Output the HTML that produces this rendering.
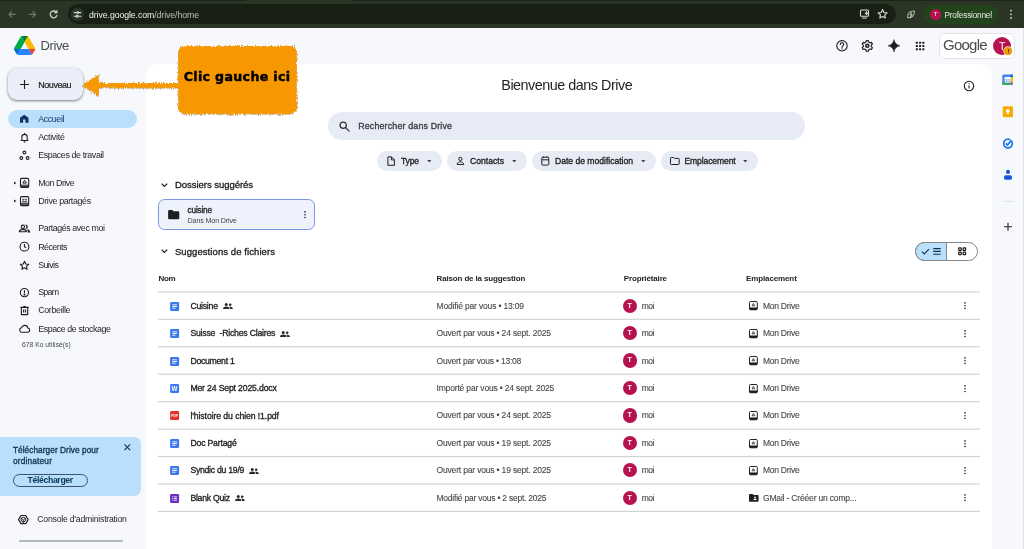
<!DOCTYPE html>
<html lang="fr"><head><meta charset="utf-8"><title>Accueil - Google Drive</title>
<style>
*{box-sizing:border-box;margin:0;padding:0}
html,body{width:1024px;height:549px;overflow:hidden;background:#f6f8fc;font-family:"Liberation Sans",sans-serif;color:#1f1f1f}
#wrap{position:absolute;left:0;top:0;width:1024px;height:549px;will-change:transform}
.a{position:absolute;white-space:nowrap}
.t{position:absolute;white-space:nowrap;line-height:14px;height:14px}
svg{position:absolute;overflow:visible}
#bar{left:0;top:0;width:1024px;height:27.600px;background:#2b3526}
#bar0{left:0;top:0;width:246px;height:1px;background:#1c2519}
#bar1{left:352px;top:0;width:672px;height:1px;background:#1c2519}
#url{left:68px;top:4px;width:828px;height:20px;border-radius:10px;background:#182014}
#prof{left:924px;top:5px;width:74px;height:19px;border-radius:10px;background:#23431c}
#main{left:146px;top:64px;width:846px;height:485px;background:#fff;border-radius:10px 10px 0 0}
.line{position:absolute;left:158px;width:822.3px;height:1px;background:#dcdcdc}
.chip{position:absolute;top:150.600px;height:20.900px;border-radius:10.500px;background:#e6ebf5}
.av{position:absolute;border-radius:50%;background:#b5124f;color:#fff;text-align:center}
</style></head><body><div id="wrap">
<div class="a" id="bar"></div><div class="a" id="bar0"></div><div class="a" id="bar1"></div><div class="a" id="url"></div><div class="a" id="prof"></div>
<svg style="left:0;top:0" width="1024" height="28" viewBox="0 0 1024 28" fill="none" stroke-linecap="round" stroke-linejoin="round">
<g stroke="#6f7a6c" stroke-width="1.2"><path d="M15 14.3H9M11.6 11.6L9 14.3l2.600 2.700"/><path d="M29.500 14.300h6M32.900 11.600l2.600 2.700-2.600 2.700"/></g>
<g stroke="#c9d1c6" stroke-width="1.300"><path d="M56.300 12.200a3.400 3.400 0 1 0 .600 3.300"/><path d="M56.900 10.600v2.200h-2.200"/></g>
<circle cx="77.500" cy="14.300" r="6.600" fill="#2b362a" stroke="none"/>
<g stroke="#d6ddd3" stroke-width="1.100"><path d="M74.300 12.600h2.200M79 12.600h1.800M74.300 16.200h1.800M78.600 16.200h2.200"/><circle cx="77.800" cy="12.600" r=".900"/><circle cx="77.200" cy="16.200" r=".900"/></g>
<g stroke="#d6ddd3" stroke-width="1.100"><rect x="860.500" y="10" width="8" height="6.200" rx="1"/><path d="M862.500 18h4M866.500 11.500v2.600M865.300 13.200l1.200 1.200 1.200-1.200"/></g>
<path d="M882.600 9.600l1.350 2.900 3.150.350-2.350 2.100.650 3.100-2.800-1.600-2.800 1.600.650-3.100-2.350-2.100 3.150-.350z" stroke="#d6ddd3" stroke-width="1.100"/>
<g stroke="#aab3a7" stroke-width="1.100"><path d="M907.500 17.600c0-4.600 2.500-7 7-6.600 0 4.800-2.600 7-7 6.600z"/><path d="M911.600 12.600l-1.400 2h1.800l-1.400 2"/></g>
<g fill="#d6ddd3" stroke="none"><circle cx="1011" cy="10.600" r=".900"/><circle cx="1011" cy="14.300" r=".900"/><circle cx="1011" cy="18" r=".900"/></g>
</svg>
<div class="t" style="left:89px;top:8px;font-size:8.7px;color:#f1f4ef;font-weight:normal;letter-spacing:-0.059px;">drive.google.com<span style="color:#b9c1b6">/drive/home</span></div>
<div class="av" style="left:930px;top:9px;width:11px;height:11px;font-size:6px;line-height:11px">T</div>
<div class="t" style="left:944.5px;top:8px;font-size:8.3px;color:#e4eae1;font-weight:normal;letter-spacing:-0.223px;">Professionnel</div>
<svg style="left:14.200px;top:36px" width="21.200" height="19" viewBox="0 0 87.300 78">
<path d="m6.600 66.850 3.850 6.650c.8 1.400 1.950 2.500 3.300 3.300l13.750-23.800h-27.500c0 1.550.4 3.100 1.200 4.500z" fill="#0066da"/>
<path d="m43.650 25-13.750-23.800c-1.350.8-2.500 1.900-3.300 3.300l-25.400 44a9.060 9.060 0 0 0 -1.200 4.500h27.500z" fill="#00ac47"/>
<path d="m73.550 76.800c1.350-.8 2.500-1.900 3.300-3.300l1.600-2.750 7.650-13.250c.8-1.400 1.200-2.950 1.200-4.500h-27.502l5.852 11.500z" fill="#ea4335"/>
<path d="m43.650 25 13.750-23.800c-1.350-.8-2.900-1.200-4.500-1.200h-18.500c-1.600 0-3.150.45-4.500 1.200z" fill="#00832d"/>
<path d="m59.800 53h-32.300l-13.750 23.800c1.350.8 2.900 1.200 4.500 1.200h50.800c1.600 0 3.150-.45 4.500-1.200z" fill="#2684fc"/>
<path d="m73.400 26.500-12.700-22c-.8-1.400-1.950-2.500-3.300-3.300l-13.750 23.800 16.150 28h27.450c0-1.550-.4-3.100-1.200-4.500z" fill="#ffba00"/>
</svg>
<div class="t" style="left:40.5px;top:39px;font-size:13px;color:#4a4d4c;font-weight:normal;letter-spacing:-0.410px;">Drive</div>
<svg style="left:0;top:28px" width="1024" height="40" viewBox="0 28 1024 40" fill="none">
<g stroke="#1f1f1f" stroke-width="1.100"><circle cx="842" cy="45.800" r="5.200"/><path d="M840.300 44.500a1.700 1.700 0 1 1 2.600 1.400c-.600.400-.900.800-.900 1.500" stroke-linecap="round"/></g><circle cx="842" cy="48.900" r=".700" fill="#1f1f1f"/>
<g stroke="#1f1f1f" stroke-width="1.200"><circle cx="867.300" cy="45.800" r="1.500" stroke-width="1.600"/><path d="M866.300 40.600h2l.350 1.500 1.300.750 1.450-.450 1 1.730-1.100 1.050v1.500l1.100 1.050-1 1.730-1.450-.450-1.300.750-.350 1.500h-2l-.350-1.500-1.300-.750-1.450.450-1-1.730 1.100-1.050v-1.500l-1.100-1.050 1-1.730 1.450.450 1.300-.750z" stroke-linejoin="round"/></g>
<path d="M894 39.600c.700 3.500 2.500 5.400 6 6.200-3.500.800-5.300 2.700-6 6.200-.700-3.500-2.500-5.400-6-6.200 3.500-.800 5.300-2.700 6-6.200z" fill="#1f1f1f" stroke="#1f1f1f" stroke-width=".500" stroke-linejoin="round"/>
<g fill="#1f1f1f"><rect x="915.800" y="41.700" width="2.100" height="2.100" rx=".500"/><rect x="919.050" y="41.700" width="2.100" height="2.100" rx=".500"/><rect x="922.300" y="41.700" width="2.100" height="2.100" rx=".500"/><rect x="915.800" y="44.950" width="2.100" height="2.100" rx=".500"/><rect x="919.050" y="44.950" width="2.100" height="2.100" rx=".500"/><rect x="922.300" y="44.950" width="2.100" height="2.100" rx=".500"/><rect x="915.800" y="48.200" width="2.100" height="2.100" rx=".500"/><rect x="919.050" y="48.200" width="2.100" height="2.100" rx=".500"/><rect x="922.300" y="48.200" width="2.100" height="2.100" rx=".500"/></g>
</svg>
<div class="a" style="left:938.500px;top:32.500px;width:76px;height:26.500px;border-radius:6px;background:#fff;border:1px solid #dfe3ea"></div>
<div class="t" style="left:943px;top:38px;font-size:15px;color:#4a4d51;font-weight:normal;letter-spacing:-0.759px;">Google</div>
<div class="av" style="left:993.100px;top:37px;width:18.300px;height:18.300px;font-size:10.500px;line-height:18.300px">T</div>
<div class="a" style="left:1004.400px;top:47.200px;width:8px;height:8px;border-radius:50%;background:#f09a00;box-shadow:0 0 0 .700px #f6ead8;color:#1f1f1f;font-size:6px;line-height:8px;text-align:center;font-weight:bold">!</div>
<div class="a" id="main"></div><div class="a" style="left:1023px;top:28px;width:1px;height:521px;background:#e0e3e9"></div>
<div class="a" style="left:8px;top:68px;width:75px;height:32px;border-radius:9px;background:#e9eef8;box-shadow:0 1px 3px rgba(60,64,67,.450),0 1px 2px rgba(60,64,67,.300)"></div>
<svg style="left:18.500px;top:79px" width="11" height="11" viewBox="0 0 11 11"><path d="M5.500 1v9M1 5.500h9" stroke="#1f1f1f" stroke-width="1.100"/></svg>
<div class="t" style="left:38.3px;top:78px;font-size:9px;color:#1f1f1f;font-weight:normal;-webkit-text-stroke:.2px;letter-spacing:-0.466px;">Nouveau</div>
<div class="a" style="left:8.300px;top:110px;width:128.500px;height:18px;border-radius:9px;background:#b9dffc"></div>
<div class="t" style="left:38.2px;top:112px;font-size:8.9px;color:#0f3d6b;font-weight:normal;letter-spacing:-0.388px;">Accueil</div>
<div class="t" style="left:38.2px;top:130px;font-size:8.9px;color:#1f1f1f;font-weight:normal;letter-spacing:-0.281px;">Activité</div>
<div class="t" style="left:38.2px;top:148px;font-size:8.9px;color:#1f1f1f;font-weight:normal;letter-spacing:-0.396px;">Espaces de travail</div>
<div class="t" style="left:38.2px;top:176px;font-size:8.9px;color:#1f1f1f;font-weight:normal;letter-spacing:-0.489px;">Mon Drive</div>
<div class="t" style="left:38.2px;top:194px;font-size:8.9px;color:#1f1f1f;font-weight:normal;letter-spacing:-0.372px;">Drive partagés</div>
<div class="t" style="left:38.2px;top:221px;font-size:8.9px;color:#1f1f1f;font-weight:normal;letter-spacing:-0.425px;">Partagés avec moi</div>
<div class="t" style="left:38.2px;top:240px;font-size:8.9px;color:#1f1f1f;font-weight:normal;letter-spacing:-0.563px;">Récents</div>
<div class="t" style="left:38.2px;top:258px;font-size:8.9px;color:#1f1f1f;font-weight:normal;letter-spacing:-0.598px;">Suivis</div>
<div class="t" style="left:38.2px;top:285px;font-size:8.9px;color:#1f1f1f;font-weight:normal;letter-spacing:-0.739px;">Spam</div>
<div class="t" style="left:38.2px;top:303px;font-size:8.9px;color:#1f1f1f;font-weight:normal;letter-spacing:-0.333px;">Corbeille</div>
<div class="t" style="left:38.2px;top:322px;font-size:8.9px;color:#1f1f1f;font-weight:normal;letter-spacing:-0.419px;">Espace de stockage</div>
<div class="t" style="left:21.9px;top:338px;font-size:6.7px;color:#444746;font-weight:normal;letter-spacing:0.057px;">678 Ko utilisé(s)</div>
<svg style="left:0;top:100px" width="146" height="449" viewBox="0 100 146 449" fill="none" stroke="#1f1f1f" stroke-width="1.100" stroke-linejoin="round">
<path d="M20 122.800v-5l4.250-3 4.250 3v5h-3.100v-3.200h-2.300v3.200z" fill="#0c3761" stroke="none"/>
<path d="M20.700 140.500h7.700M21.900 140.500v-3.500a2.650 2.650 0 0 1 5.300 0v3.500M24.550 133v1M23.700 141.900h1.700"/>
<circle cx="24.450" cy="152.500" r="1.400"/><circle cx="21.300" cy="158" r="1.400"/><circle cx="27.600" cy="158" r="1.400"/>
<path d="M14 181.400l2.300 1.500-2.300 1.500zM14 199.600l2.300 1.500-2.300 1.500z" fill="#1f1f1f" stroke="none"/>
<rect x="20.500" y="178.400" width="8.200" height="9" rx="1.200"/><path d="M20.500 185.200h8.200" stroke-width="1"/><path d="M20.700 186.300h7.800v.3a.8.8 0 0 1-.8.800h-6.200a.8.800 0 0 1-.8-.8z" fill="#1f1f1f" stroke-width=".400"/><path d="M24.600 180.200l1.800 2.900h-3.600z" stroke-width="1"/>
<rect x="20.500" y="196.600" width="8.200" height="9" rx="1.200"/><path d="M20.500 203.300h8.200" stroke-width="1"/><path d="M20.700 204.500h7.800v.3a.8.800 0 0 1-.8.800h-6.200a.8.800 0 0 1-.8-.8z" fill="#1f1f1f" stroke-width=".400"/><circle cx="23.300" cy="199.600" r=".650" stroke-width=".800"/><circle cx="25.900" cy="199.600" r=".650" stroke-width=".800"/><path d="M22.100 201.700h5" stroke-width=".900"/>
<circle cx="22.900" cy="226.800" r="1.650"/><path d="M19.300 231.800c.300-1.800 1.700-2.400 3.600-2.400s3.300.600 3.600 2.400z"/><path d="M25.600 224.800a2 2 0 0 1 0 4 2.700 2.700 0 0 0 0-4zM27.300 229.500c1.600.300 2.600 1 2.700 2.800h-1.900c0-1.200-.300-2.100-.800-2.800z" fill="#1f1f1f" stroke-width=".500"/>
<circle cx="24.450" cy="246.650" r="4.400"/><path d="M24.450 244.100v2.700l1.800 1.100"/>
<path d="M24.500 261.300l1.250 2.700 2.950.350-2.200 2 .600 2.900-2.600-1.500-2.600 1.500.600-2.900-2.200-2 2.950-.350z"/>
<circle cx="24.450" cy="292.600" r="4.100"/><path d="M24.450 290.200v2.800"/><circle cx="24.450" cy="294.600" r=".500" fill="#1f1f1f"/>
<path d="M21.400 307.500h6.300v7.100h-6.300zM20.400 307.400h8.300M23.300 306.500h2.500M23.600 309.500v3.100M25.500 309.500v3.100"/>
<path d="M21.400 332.300h6.200a2.100 2.100 0 0 0 .400-4.170 3.300 3.300 0 0 0-6.400-.500 2.400 2.400 0 0 0-.200 4.670z"/>
<path d="M18.600 519.600l2.400-4.100h4.700l2.400 4.100-2.400 4.100h-4.700z" stroke-width="1.200"/><circle cx="23.350" cy="519.600" r="2.300" stroke-width="1"/><path d="M23.350 519.900v3.300M23.350 519.900l-2.600-1.700M23.350 519.900l2.600-1.700" stroke-width=".800"/>
</svg>
<div class="a" style="left:0;top:437px;width:141.200px;height:59.200px;border-radius:0 7px 7px 0;background:#b9dffc"></div>
<div class="t" style="left:12.9px;top:443px;font-size:8.3px;color:#0b3556;font-weight:normal;-webkit-text-stroke:.32px;letter-spacing:0.048px;">Télécharger Drive pour</div>
<div class="t" style="left:12.9px;top:454px;font-size:8.3px;color:#0b3556;font-weight:normal;-webkit-text-stroke:.32px;letter-spacing:0.182px;">ordinateur</div>
<svg style="left:124.300px;top:443.500px" width="6.600" height="6.600" viewBox="0 0 6.600 6.600"><path d="M.400.400l5.800 5.800M6.200.400l-5.800 5.800" stroke="#0b3556" stroke-width="1.100"/></svg>
<div class="a" style="left:12.900px;top:474px;width:74.800px;height:13.300px;border-radius:7px;border:1px solid #3c546c"></div>
<div class="t" style="left:27.6px;top:473px;font-size:8.7px;color:#0b3556;font-weight:bold;letter-spacing:-0.368px;">Télécharger</div>
<div class="t" style="left:37.3px;top:512px;font-size:8.7px;color:#1f1f1f;font-weight:normal;letter-spacing:-0.228px;">Console d'administration</div>
<div class="a" style="left:18.500px;top:540.200px;width:104.200px;height:1.600px;border-radius:1px;background:#b4b7bb"></div>
<div class="t" style="left:501.3px;top:78px;font-size:14.4px;color:#1f1f1f;font-weight:normal;letter-spacing:-0.497px;">Bienvenue dans Drive</div>
<svg style="left:963px;top:80.300px" width="12" height="12" viewBox="0 0 12 12" fill="none" stroke="#1f1f1f"><circle cx="6" cy="6" r="4.700" stroke-width="1.100"/><path d="M6 5.400v3" stroke-width="1.100"/><circle cx="6" cy="3.700" r=".600" fill="#1f1f1f" stroke="none"/></svg>
<div class="a" style="left:328.300px;top:111.700px;width:477px;height:28.600px;border-radius:14.300px;background:#e6ebf5"></div>
<svg style="left:338.500px;top:121px" width="11" height="11" viewBox="0 0 11 11" fill="none" stroke="#333638" stroke-width="1.250"><circle cx="4.200" cy="4.200" r="3.100"/><path d="M6.500 6.500l3.600 3.600" stroke-linecap="round"/></svg>
<div class="t" style="left:358.2px;top:119px;font-size:8.9px;color:#3a3d40;font-weight:normal;-webkit-text-stroke:.32px;letter-spacing:0.153px;">Rechercher dans Drive</div>
<div class="chip" style="left:377.4px;width:64.8px"></div>
<div class="t" style="left:401px;top:154px;font-size:8.6px;color:#1f1f1f;font-weight:normal;-webkit-text-stroke:.32px;letter-spacing:-0.183px;">Type</div>
<svg style="left:427.2px;top:159.800px" width="4.600" height="2.600" viewBox="0 0 5 3"><path d="M0 0h5l-2.500 3z" fill="#444746"/></svg>
<div class="chip" style="left:447.2px;width:79.6px"></div>
<div class="t" style="left:470px;top:154px;font-size:8.6px;color:#1f1f1f;font-weight:normal;-webkit-text-stroke:.32px;letter-spacing:0.010px;">Contacts</div>
<svg style="left:511.8px;top:159.800px" width="4.600" height="2.600" viewBox="0 0 5 3"><path d="M0 0h5l-2.500 3z" fill="#444746"/></svg>
<div class="chip" style="left:531.8px;width:124.2px"></div>
<div class="t" style="left:555px;top:154px;font-size:8.6px;color:#1f1f1f;font-weight:normal;-webkit-text-stroke:.32px;letter-spacing:-0.018px;">Date de modification</div>
<svg style="left:641.0px;top:159.800px" width="4.600" height="2.600" viewBox="0 0 5 3"><path d="M0 0h5l-2.500 3z" fill="#444746"/></svg>
<div class="chip" style="left:661px;width:97.2px"></div>
<div class="t" style="left:684.5px;top:154px;font-size:8.6px;color:#1f1f1f;font-weight:normal;-webkit-text-stroke:.32px;letter-spacing:-0.138px;">Emplacement</div>
<svg style="left:743.2px;top:159.800px" width="4.600" height="2.600" viewBox="0 0 5 3"><path d="M0 0h5l-2.500 3z" fill="#444746"/></svg>
<svg style="left:370px;top:151px" width="400" height="20" viewBox="370 151 400 20" fill="none" stroke="#1f1f1f" stroke-width="1" stroke-linejoin="round">
<path d="M387.900 156.900h3.700l2.800 2.800v5.600h-6.500zM391.400 156.900v3h3"/>
<circle cx="460.400" cy="158.900" r="1.650"/><path d="M457.200 164.500v-.600c0-1.300 1.900-2 3.200-2s3.200.700 3.200 2v.600z"/>
<rect x="541.800" y="157.200" width="7" height="7.900" rx="1"/><path d="M541.800 159.800h7M543.600 156.300v1.500M547 156.300v1.500"/>
<path d="M670.500 158.300a.800.800 0 0 1 .800-.800h2.400l.900.900h3.800a.8.800 0 0 1 .8.800v4.500a.8.800 0 0 1-.8.800h-7.100a.8.800 0 0 1-.8-.8z"/>
</svg>
<svg style="left:160.8px;top:182.9px" width="6.800" height="4.300" viewBox="0 0 7 4.400"><path d="M.600.600l2.900 2.900 2.900-2.900" fill="none" stroke="#1f1f1f" stroke-width="1.300"/></svg>
<div class="t" style="left:174.9px;top:178px;font-size:9.5px;color:#1f1f1f;font-weight:normal;-webkit-text-stroke:.32px;letter-spacing:-0.029px;">Dossiers suggérés</div>
<div class="a" style="left:158.200px;top:198.800px;width:157.300px;height:31.700px;border-radius:6.500px;background:#edf2fc;border:1px solid #7b97e6"></div>
<svg style="left:167.600px;top:210px" width="11.400" height="9.300" viewBox="0 0 12 10"><path d="M0 1.200a1.200 1.200 0 0 1 1.200-1.200h3.300l1.300 1.300h5a1.200 1.200 0 0 1 1.200 1.200v6.300a1.200 1.200 0 0 1-1.200 1.200h-9.600a1.200 1.200 0 0 1-1.200-1.200z" fill="#1f1f1f"/></svg>
<div class="t" style="left:187.6px;top:203px;font-size:8.3px;color:#1f1f1f;font-weight:normal;-webkit-text-stroke:.32px;letter-spacing:-0.235px;">cuisine</div>
<div class="t" style="left:187.6px;top:214px;font-size:7.2px;color:#444746;font-weight:normal;letter-spacing:-0.173px;">Dans Mon Drive</div>
<svg style="left:304.1px;top:211.3px" width="2" height="7.400" viewBox="0 0 2 7.400" fill="#1f1f1f"><circle cx="1" cy=".900" r=".800"/><circle cx="1" cy="3.700" r=".800"/><circle cx="1" cy="6.500" r=".800"/></svg>
<svg style="left:160.8px;top:249.3px" width="6.800" height="4.300" viewBox="0 0 7 4.400"><path d="M.600.600l2.900 2.900 2.900-2.900" fill="none" stroke="#1f1f1f" stroke-width="1.300"/></svg>
<div class="t" style="left:174.9px;top:245px;font-size:9.5px;color:#1f1f1f;font-weight:normal;-webkit-text-stroke:.32px;letter-spacing:0.083px;">Suggestions de fichiers</div>
<div class="a" style="left:915px;top:241.800px;width:63.400px;height:18.900px;border-radius:9.500px;border:1px solid #858886;background:#fff"></div>
<div class="a" style="left:915px;top:241.800px;width:32px;height:18.900px;border-radius:9.500px 0 0 9.500px;border:1px solid #858886;background:#b9dffc"></div>
<svg style="left:915px;top:242px" width="63" height="19" viewBox="915 242 63 19" fill="none" stroke="#0b3556" stroke-width="1.100">
<path d="M922 251.700l2.300 2.300 4.700-4.900"/><path d="M933.200 248.600h7.500M933.200 251.400h7.500M933.200 254.200h7.500" stroke-width="1.100"/>
<g stroke="#1f1f1f" stroke-width="1.200"><rect x="958.700" y="247.900" width="2.500" height="2.500" rx=".400"/><rect x="963.100" y="247.900" width="2.500" height="2.500" rx=".400"/><rect x="958.700" y="252.200" width="2.500" height="2.500" rx=".400"/><rect x="963.100" y="252.200" width="2.500" height="2.500" rx=".400"/></g>
</svg>
<div class="t" style="left:158.6px;top:272px;font-size:8px;color:#1f1f1f;font-weight:bold;letter-spacing:-0.432px;">Nom</div>
<div class="t" style="left:436.5px;top:272px;font-size:8px;color:#1f1f1f;font-weight:bold;letter-spacing:-0.145px;">Raison de la suggestion</div>
<div class="t" style="left:623.75px;top:272px;font-size:8px;color:#1f1f1f;font-weight:bold;letter-spacing:-0.144px;">Propriétaire</div>
<div class="t" style="left:746px;top:272px;font-size:8px;color:#1f1f1f;font-weight:bold;letter-spacing:-0.122px;">Emplacement</div>
<div class="line" style="top:291px;background:rgb(224,224,224)"></div>
<div class="line" style="top:292px;background:rgb(233,233,233)"></div>
<div class="line" style="top:318px;background:rgb(244,244,244)"></div>
<div class="line" style="top:319px;background:rgb(214,214,214)"></div>
<svg style="left:169.8px;top:301.72px" width="9.200" height="9" viewBox="0 0 10 10"><rect width="10" height="10" rx="1.400" fill="#3b78f0"/><path d="M2.400 3.100h5.200M2.400 5h5.200M2.400 6.900h3.600" stroke="#fff" stroke-width="1"/></svg>
<div class="t" style="left:190.4px;top:299px;font-size:8.7px;color:#1f1f1f;font-weight:normal;-webkit-text-stroke:.32px;letter-spacing:-0.228px;">Cuisine</div>
<svg style="left:222.60px;top:303.12px" width="9.900" height="6" viewBox="0 0 9.200 5.600" fill="#2a2a2a"><circle cx="3" cy="1.400" r="1.400"/><path d="M0 5.600c.100-1.700 1.300-2.300 3-2.300s2.900.600 3 2.300z"/><circle cx="6.700" cy="1.600" r="1.200"/><path d="M6.700 3.400c1.500 0 2.400.600 2.500 2.200h-2.600c0-.900-.400-1.600-1-2 .300-.100.700-.200 1.100-.200z"/></svg>
<div class="t" style="left:436.5px;top:299px;font-size:8.5px;color:#444746;font-weight:normal;-webkit-text-stroke:.1px;letter-spacing:-0.164px;">Modifié par vous • 13:09</div>
<div class="av" style="left:622.600px;top:298.52px;width:14.300px;height:14.300px;font-size:7px;line-height:14.300px;font-weight:bold">T</div>
<div class="t" style="left:641.75px;top:299px;font-size:8.5px;color:#444746;font-weight:normal;-webkit-text-stroke:.1px;letter-spacing:-0.481px;">moi</div>
<svg style="left:749px;top:301.42px" width="8.800" height="9.200" viewBox="0 0 8.800 9.200" fill="none" stroke="#1f1f1f"><rect x=".500" y=".500" width="7.800" height="8.200" rx="1.100" stroke-width="1"/><path d="M.500 6.800h7.800v.9a1 1 0 0 1-1 1h-5.800a1 1 0 0 1-1-1z" fill="#1f1f1f" stroke-width=".500"/><path d="M4.400 2.500l1.400 2.300h-2.800z" stroke-width=".800" stroke-linejoin="round"/></svg>
<div class="t" style="left:763px;top:299px;font-size:8.5px;color:#444746;font-weight:normal;-webkit-text-stroke:.1px;letter-spacing:-0.263px;">Mon Drive</div>
<svg style="left:963.8px;top:302.3px" width="2" height="7.400" viewBox="0 0 2 7.400" fill="#1f1f1f"><circle cx="1" cy=".900" r=".800"/><circle cx="1" cy="3.700" r=".800"/><circle cx="1" cy="6.500" r=".800"/></svg>
<div class="line" style="top:346px;background:rgb(219,219,219)"></div>
<div class="line" style="top:347px;background:rgb(238,238,238)"></div>
<svg style="left:169.8px;top:329.16px" width="9.200" height="9" viewBox="0 0 10 10"><rect width="10" height="10" rx="1.400" fill="#3b78f0"/><path d="M2.400 3.100h5.200M2.400 5h5.200M2.400 6.900h3.600" stroke="#fff" stroke-width="1"/></svg>
<div class="t" style="left:190.4px;top:326px;font-size:8.7px;color:#1f1f1f;font-weight:normal;-webkit-text-stroke:.32px;letter-spacing:-0.218px;">Suisse &nbsp;-Riches Claires</div>
<svg style="left:280.00px;top:330.56px" width="9.900" height="6" viewBox="0 0 9.200 5.600" fill="#2a2a2a"><circle cx="3" cy="1.400" r="1.400"/><path d="M0 5.600c.100-1.700 1.300-2.300 3-2.300s2.900.600 3 2.300z"/><circle cx="6.700" cy="1.600" r="1.200"/><path d="M6.700 3.400c1.500 0 2.400.600 2.500 2.200h-2.600c0-.900-.400-1.600-1-2 .300-.100.700-.200 1.100-.200z"/></svg>
<div class="t" style="left:436.5px;top:326px;font-size:8.5px;color:#444746;font-weight:normal;-webkit-text-stroke:.1px;letter-spacing:-0.170px;">Ouvert par vous • 24 sept. 2025</div>
<div class="av" style="left:622.600px;top:325.96px;width:14.300px;height:14.300px;font-size:7px;line-height:14.300px;font-weight:bold">T</div>
<div class="t" style="left:641.75px;top:326px;font-size:8.5px;color:#444746;font-weight:normal;-webkit-text-stroke:.1px;letter-spacing:-0.481px;">moi</div>
<svg style="left:749px;top:328.86px" width="8.800" height="9.200" viewBox="0 0 8.800 9.200" fill="none" stroke="#1f1f1f"><rect x=".500" y=".500" width="7.800" height="8.200" rx="1.100" stroke-width="1"/><path d="M.500 6.800h7.800v.9a1 1 0 0 1-1 1h-5.800a1 1 0 0 1-1-1z" fill="#1f1f1f" stroke-width=".500"/><path d="M4.400 2.500l1.400 2.300h-2.800z" stroke-width=".800" stroke-linejoin="round"/></svg>
<div class="t" style="left:763px;top:326px;font-size:8.5px;color:#444746;font-weight:normal;-webkit-text-stroke:.1px;letter-spacing:-0.263px;">Mon Drive</div>
<svg style="left:963.8px;top:329.8px" width="2" height="7.400" viewBox="0 0 2 7.400" fill="#1f1f1f"><circle cx="1" cy=".900" r=".800"/><circle cx="1" cy="3.700" r=".800"/><circle cx="1" cy="6.500" r=".800"/></svg>
<div class="line" style="top:373px;background:rgb(238,238,238)"></div>
<div class="line" style="top:374px;background:rgb(219,219,219)"></div>
<svg style="left:169.8px;top:356.60px" width="9.200" height="9" viewBox="0 0 10 10"><rect width="10" height="10" rx="1.400" fill="#3b78f0"/><path d="M2.400 3.100h5.200M2.400 5h5.200M2.400 6.900h3.600" stroke="#fff" stroke-width="1"/></svg>
<div class="t" style="left:190.4px;top:354px;font-size:8.7px;color:#1f1f1f;font-weight:normal;-webkit-text-stroke:.32px;letter-spacing:-0.278px;">Document 1</div>
<div class="t" style="left:436.5px;top:354px;font-size:8.5px;color:#444746;font-weight:normal;-webkit-text-stroke:.1px;letter-spacing:-0.209px;">Ouvert par vous • 13:08</div>
<div class="av" style="left:622.600px;top:353.40px;width:14.300px;height:14.300px;font-size:7px;line-height:14.300px;font-weight:bold">T</div>
<div class="t" style="left:641.75px;top:354px;font-size:8.5px;color:#444746;font-weight:normal;-webkit-text-stroke:.1px;letter-spacing:-0.481px;">moi</div>
<svg style="left:749px;top:356.30px" width="8.800" height="9.200" viewBox="0 0 8.800 9.200" fill="none" stroke="#1f1f1f"><rect x=".500" y=".500" width="7.800" height="8.200" rx="1.100" stroke-width="1"/><path d="M.500 6.800h7.800v.9a1 1 0 0 1-1 1h-5.800a1 1 0 0 1-1-1z" fill="#1f1f1f" stroke-width=".500"/><path d="M4.400 2.500l1.400 2.300h-2.800z" stroke-width=".800" stroke-linejoin="round"/></svg>
<div class="t" style="left:763px;top:354px;font-size:8.5px;color:#444746;font-weight:normal;-webkit-text-stroke:.1px;letter-spacing:-0.263px;">Mon Drive</div>
<svg style="left:963.8px;top:357.2px" width="2" height="7.400" viewBox="0 0 2 7.400" fill="#1f1f1f"><circle cx="1" cy=".900" r=".800"/><circle cx="1" cy="3.700" r=".800"/><circle cx="1" cy="6.500" r=".800"/></svg>
<div class="line" style="top:401px;background:rgb(214,214,214)"></div>
<div class="line" style="top:402px;background:rgb(244,244,244)"></div>
<svg style="left:169.8px;top:384.04px" width="9.200" height="9" viewBox="0 0 10 10"><rect width="10" height="10" rx="1.400" fill="#3b78f0"/><text x="5" y="7.600" font-size="7" font-weight="bold" fill="#fff" text-anchor="middle" font-family="Liberation Sans,sans-serif">W</text></svg>
<div class="t" style="left:190.4px;top:381px;font-size:8.7px;color:#1f1f1f;font-weight:normal;-webkit-text-stroke:.32px;letter-spacing:-0.170px;">Mer 24 Sept 2025.docx</div>
<div class="t" style="left:436.5px;top:381px;font-size:8.5px;color:#444746;font-weight:normal;-webkit-text-stroke:.1px;letter-spacing:-0.167px;">Importé par vous • 24 sept. 2025</div>
<div class="av" style="left:622.600px;top:380.84px;width:14.300px;height:14.300px;font-size:7px;line-height:14.300px;font-weight:bold">T</div>
<div class="t" style="left:641.75px;top:381px;font-size:8.5px;color:#444746;font-weight:normal;-webkit-text-stroke:.1px;letter-spacing:-0.481px;">moi</div>
<svg style="left:749px;top:383.74px" width="8.800" height="9.200" viewBox="0 0 8.800 9.200" fill="none" stroke="#1f1f1f"><rect x=".500" y=".500" width="7.800" height="8.200" rx="1.100" stroke-width="1"/><path d="M.500 6.800h7.800v.9a1 1 0 0 1-1 1h-5.800a1 1 0 0 1-1-1z" fill="#1f1f1f" stroke-width=".500"/><path d="M4.400 2.500l1.400 2.300h-2.800z" stroke-width=".800" stroke-linejoin="round"/></svg>
<div class="t" style="left:763px;top:381px;font-size:8.5px;color:#444746;font-weight:normal;-webkit-text-stroke:.1px;letter-spacing:-0.263px;">Mon Drive</div>
<svg style="left:963.8px;top:384.6px" width="2" height="7.400" viewBox="0 0 2 7.400" fill="#1f1f1f"><circle cx="1" cy=".900" r=".800"/><circle cx="1" cy="3.700" r=".800"/><circle cx="1" cy="6.500" r=".800"/></svg>
<div class="line" style="top:428px;background:rgb(233,233,233)"></div>
<div class="line" style="top:429px;background:rgb(224,224,224)"></div>
<svg style="left:169.8px;top:411.48px" width="9.200" height="9" viewBox="0 0 10 10"><rect width="10" height="10" rx="1.400" fill="#e0342a"/><text x="5" y="6.500" font-size="3.800" font-weight="bold" fill="#fff" text-anchor="middle" font-family="Liberation Sans,sans-serif">PDF</text></svg>
<div class="t" style="left:190.4px;top:409px;font-size:8.7px;color:#1f1f1f;font-weight:normal;-webkit-text-stroke:.32px;letter-spacing:-0.095px;">l'histoire du chien !1.pdf</div>
<div class="t" style="left:436.5px;top:408px;font-size:8.5px;color:#444746;font-weight:normal;-webkit-text-stroke:.1px;letter-spacing:-0.170px;">Ouvert par vous • 24 sept. 2025</div>
<div class="av" style="left:622.600px;top:408.28px;width:14.300px;height:14.300px;font-size:7px;line-height:14.300px;font-weight:bold">T</div>
<div class="t" style="left:641.75px;top:408px;font-size:8.5px;color:#444746;font-weight:normal;-webkit-text-stroke:.1px;letter-spacing:-0.481px;">moi</div>
<svg style="left:749px;top:411.18px" width="8.800" height="9.200" viewBox="0 0 8.800 9.200" fill="none" stroke="#1f1f1f"><rect x=".500" y=".500" width="7.800" height="8.200" rx="1.100" stroke-width="1"/><path d="M.500 6.800h7.800v.9a1 1 0 0 1-1 1h-5.800a1 1 0 0 1-1-1z" fill="#1f1f1f" stroke-width=".500"/><path d="M4.400 2.500l1.400 2.300h-2.800z" stroke-width=".800" stroke-linejoin="round"/></svg>
<div class="t" style="left:763px;top:408px;font-size:8.5px;color:#444746;font-weight:normal;-webkit-text-stroke:.1px;letter-spacing:-0.263px;">Mon Drive</div>
<svg style="left:963.8px;top:412.1px" width="2" height="7.400" viewBox="0 0 2 7.400" fill="#1f1f1f"><circle cx="1" cy=".900" r=".800"/><circle cx="1" cy="3.700" r=".800"/><circle cx="1" cy="6.500" r=".800"/></svg>
<div class="line" style="top:455px;background:rgb(252,252,252)"></div>
<div class="line" style="top:456px;background:rgb(211,211,211)"></div>
<div class="line" style="top:457px;background:rgb(249,249,249)"></div>
<svg style="left:169.8px;top:438.92px" width="9.200" height="9" viewBox="0 0 10 10"><rect width="10" height="10" rx="1.400" fill="#3b78f0"/><path d="M2.400 3.100h5.200M2.400 5h5.200M2.400 6.900h3.600" stroke="#fff" stroke-width="1"/></svg>
<div class="t" style="left:190.4px;top:436px;font-size:8.7px;color:#1f1f1f;font-weight:normal;-webkit-text-stroke:.32px;letter-spacing:-0.185px;">Doc Partagé</div>
<div class="t" style="left:436.5px;top:436px;font-size:8.5px;color:#444746;font-weight:normal;-webkit-text-stroke:.1px;letter-spacing:-0.170px;">Ouvert par vous • 19 sept. 2025</div>
<div class="av" style="left:622.600px;top:435.72px;width:14.300px;height:14.300px;font-size:7px;line-height:14.300px;font-weight:bold">T</div>
<div class="t" style="left:641.75px;top:436px;font-size:8.5px;color:#444746;font-weight:normal;-webkit-text-stroke:.1px;letter-spacing:-0.481px;">moi</div>
<svg style="left:749px;top:438.62px" width="8.800" height="9.200" viewBox="0 0 8.800 9.200" fill="none" stroke="#1f1f1f"><rect x=".500" y=".500" width="7.800" height="8.200" rx="1.100" stroke-width="1"/><path d="M.500 6.800h7.800v.9a1 1 0 0 1-1 1h-5.800a1 1 0 0 1-1-1z" fill="#1f1f1f" stroke-width=".500"/><path d="M4.400 2.500l1.400 2.300h-2.800z" stroke-width=".800" stroke-linejoin="round"/></svg>
<div class="t" style="left:763px;top:436px;font-size:8.5px;color:#444746;font-weight:normal;-webkit-text-stroke:.1px;letter-spacing:-0.263px;">Mon Drive</div>
<svg style="left:963.8px;top:439.5px" width="2" height="7.400" viewBox="0 0 2 7.400" fill="#1f1f1f"><circle cx="1" cy=".900" r=".800"/><circle cx="1" cy="3.700" r=".800"/><circle cx="1" cy="6.500" r=".800"/></svg>
<div class="line" style="top:483px;background:rgb(228,228,228)"></div>
<div class="line" style="top:484px;background:rgb(229,229,229)"></div>
<svg style="left:169.8px;top:466.36px" width="9.200" height="9" viewBox="0 0 10 10"><rect width="10" height="10" rx="1.400" fill="#3b78f0"/><path d="M2.400 3.100h5.200M2.400 5h5.200M2.400 6.900h3.600" stroke="#fff" stroke-width="1"/></svg>
<div class="t" style="left:190.4px;top:463px;font-size:8.7px;color:#1f1f1f;font-weight:normal;-webkit-text-stroke:.32px;letter-spacing:-0.269px;">Syndic du 19/9</div>
<svg style="left:248.95px;top:467.76px" width="9.900" height="6" viewBox="0 0 9.200 5.600" fill="#2a2a2a"><circle cx="3" cy="1.400" r="1.400"/><path d="M0 5.600c.100-1.700 1.300-2.300 3-2.300s2.900.600 3 2.300z"/><circle cx="6.700" cy="1.600" r="1.200"/><path d="M6.700 3.400c1.500 0 2.400.600 2.500 2.200h-2.600c0-.900-.400-1.600-1-2 .300-.100.700-.200 1.100-.200z"/></svg>
<div class="t" style="left:436.5px;top:463px;font-size:8.5px;color:#444746;font-weight:normal;-webkit-text-stroke:.1px;letter-spacing:-0.170px;">Ouvert par vous • 19 sept. 2025</div>
<div class="av" style="left:622.600px;top:463.16px;width:14.300px;height:14.300px;font-size:7px;line-height:14.300px;font-weight:bold">T</div>
<div class="t" style="left:641.75px;top:463px;font-size:8.5px;color:#444746;font-weight:normal;-webkit-text-stroke:.1px;letter-spacing:-0.481px;">moi</div>
<svg style="left:749px;top:466.06px" width="8.800" height="9.200" viewBox="0 0 8.800 9.200" fill="none" stroke="#1f1f1f"><rect x=".500" y=".500" width="7.800" height="8.200" rx="1.100" stroke-width="1"/><path d="M.500 6.800h7.800v.9a1 1 0 0 1-1 1h-5.800a1 1 0 0 1-1-1z" fill="#1f1f1f" stroke-width=".500"/><path d="M4.400 2.500l1.400 2.300h-2.800z" stroke-width=".800" stroke-linejoin="round"/></svg>
<div class="t" style="left:763px;top:463px;font-size:8.5px;color:#444746;font-weight:normal;-webkit-text-stroke:.1px;letter-spacing:-0.263px;">Mon Drive</div>
<svg style="left:963.8px;top:467.0px" width="2" height="7.400" viewBox="0 0 2 7.400" fill="#1f1f1f"><circle cx="1" cy=".900" r=".800"/><circle cx="1" cy="3.700" r=".800"/><circle cx="1" cy="6.500" r=".800"/></svg>
<div class="line" style="top:510px;background:rgb(247,247,247)"></div>
<div class="line" style="top:511px;background:rgb(211,211,211)"></div>
<svg style="left:169.8px;top:493.80px" width="9.200" height="9" viewBox="0 0 10 10"><rect width="10" height="10" rx="1.400" fill="#6b2fc4"/><path d="M4 3.100h3.600M4 5h3.600M4 6.900h3.600" stroke="#fff" stroke-width=".900"/><path d="M2.300 3.100h.9M2.300 5h.9M2.300 6.900h.9" stroke="#fff" stroke-width=".900"/></svg>
<div class="t" style="left:190.4px;top:491px;font-size:8.7px;color:#1f1f1f;font-weight:normal;-webkit-text-stroke:.32px;letter-spacing:-0.254px;">Blank Quiz</div>
<svg style="left:234.70px;top:495.20px" width="9.900" height="6" viewBox="0 0 9.200 5.600" fill="#2a2a2a"><circle cx="3" cy="1.400" r="1.400"/><path d="M0 5.600c.100-1.700 1.300-2.300 3-2.300s2.900.600 3 2.300z"/><circle cx="6.700" cy="1.600" r="1.200"/><path d="M6.700 3.400c1.500 0 2.400.600 2.500 2.200h-2.600c0-.900-.400-1.600-1-2 .300-.100.700-.200 1.100-.200z"/></svg>
<div class="t" style="left:436.5px;top:491px;font-size:8.5px;color:#444746;font-weight:normal;-webkit-text-stroke:.1px;letter-spacing:-0.225px;">Modifié par vous • 2 sept. 2025</div>
<div class="av" style="left:622.600px;top:490.60px;width:14.300px;height:14.300px;font-size:7px;line-height:14.300px;font-weight:bold">T</div>
<div class="t" style="left:641.75px;top:491px;font-size:8.5px;color:#444746;font-weight:normal;-webkit-text-stroke:.1px;letter-spacing:-0.481px;">moi</div>
<svg style="left:748.800px;top:494.10px" width="9.600" height="7.800" viewBox="0 0 10 8"><path d="M0 1a1 1 0 0 1 1-1h2.800l1.100 1.100h4.100a1 1 0 0 1 1 1v4.900a1 1 0 0 1-1 1h-8a1 1 0 0 1-1-1z" fill="#1f1f1f"/><circle cx="6.300" cy="3.500" r=".900" fill="#fff"/><path d="M4.500 6.300c.100-1 .800-1.400 1.800-1.400s1.700.400 1.800 1.400z" fill="#fff"/></svg>
<div class="t" style="left:763px;top:491px;font-size:8.5px;color:#444746;font-weight:normal;-webkit-text-stroke:.1px;letter-spacing:-0.175px;">GMail - Crééer un comp...</div>
<svg style="left:963.8px;top:494.4px" width="2" height="7.400" viewBox="0 0 2 7.400" fill="#1f1f1f"><circle cx="1" cy=".900" r=".800"/><circle cx="1" cy="3.700" r=".800"/><circle cx="1" cy="6.500" r=".800"/></svg>
<svg style="left:993px;top:64px" width="31" height="200" viewBox="993 64 31 200" fill="none">
<rect x="1002.300" y="74.600" width="10.700" height="10.400" rx="1.300" fill="#4285f4"/><rect x="1010.600" y="77" width="2.400" height="5.600" fill="#fbbc04"/><path d="M1002.300 82.600h8.300v2.400h-7a1.300 1.300 0 0 1-1.300-1.300z" fill="#34a853"/><path d="M1010.600 82.600h2.400l-2.400 2.400z" fill="#ea4335"/><path d="M1010.600 74.600h1.100a1.300 1.300 0 0 1 1.300 1.300v1.100h-2.400z" fill="#1967d2"/><rect x="1004.700" y="77" width="5.900" height="5.600" fill="#fff"/>
<text x="1007.650" y="81.500" font-size="4.400" font-weight="bold" fill="#4285f4" text-anchor="middle" font-family="Liberation Sans,sans-serif">31</text>
<rect x="1002.700" y="106.300" width="10.300" height="11" rx="1.400" fill="#f9ab00"/><circle cx="1007.850" cy="110.800" r="1.900" fill="#fff"/><rect x="1006.850" y="112.300" width="2" height="1.700" fill="#fff"/>
<circle cx="1008" cy="143.500" r="4.300" stroke="#1a73e8" stroke-width="1.700"/><path d="M1005.800 143.400l1.700 1.700 3.800-4.600" stroke="#1a73e8" stroke-width="1.700"/><path d="M1009.800 139.500l2.500-1 .500 2.500z" fill="#f6f8fc" stroke="none"/>
<circle cx="1008" cy="171.900" r="2.100" fill="#1a56db"/><rect x="1004" y="175.200" width="8" height="4.600" rx="1.900" fill="#1a56db"/>
<path d="M1002.500 201.300h11.500" stroke="#e1e4e9" stroke-width="1"/>
<path d="M1008 222.700v8M1004 226.700h8" stroke="#1f1f1f" stroke-width="1.100"/>
</svg>
<svg style="left:70px;top:40px" width="240" height="80" viewBox="70 40 240 80">
<defs><filter id="rough" x="-5%" y="-8%" width="110%" height="116%"><feTurbulence type="fractalNoise" baseFrequency="0.900" numOctaves="3" seed="7" result="n"/><feDisplacementMap in="SourceGraphic" in2="n" scale="4.500" xChannelSelector="R" yChannelSelector="G"/></filter></defs>
<filter id="sh" x="-5%" y="-8%" width="110%" height="120%"><feDropShadow dx="0" dy=".600" stdDeviation=".700" flood-color="#7a4300" flood-opacity=".550"/></filter><g filter="url(#sh)"><g filter="url(#rough)" fill="#f89805"><rect x="178.200" y="46" width="118.600" height="68" rx="6.500"/><rect x="96" y="83" width="84" height="4.800"/><path d="M81.700 85.300l17.100-10.600v21.200z"/></g></g>
</svg>
<div class="t" style="left:183.7px;top:70px;font-size:12.6px;color:#000;font-weight:bold;font-family:DejaVu Sans,Liberation Sans,sans-serif;-webkit-text-stroke:.450px #000;letter-spacing:0.340px;">Clic gauche ici</div>
</div></body></html>
